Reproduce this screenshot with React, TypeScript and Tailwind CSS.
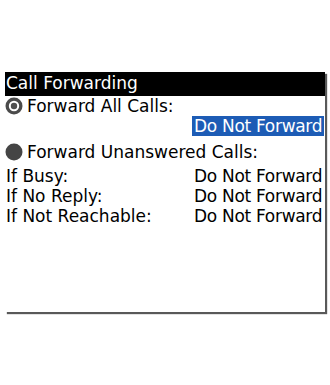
import React from 'react';

const RadioOn = () => (
  <svg width="18" height="18" viewBox="0 0 18 18" className="shrink-0">
    <circle cx="9" cy="9" r="8.5" fill="#4b4b4b" />
    <circle cx="9" cy="9" r="5.2" fill="#ffffff" />
    <circle cx="9" cy="9" r="3.2" fill="#4f4f4f" />
  </svg>
);

const RadioOff = () => (
  <svg width="18" height="18" viewBox="0 0 18 18" className="shrink-0">
    <circle cx="9" cy="9" r="8.5" fill="#454545" />
  </svg>
);

const rules = [
  { label: 'If Busy:', value: 'Do Not Forward' },
  { label: 'If No Reply:', value: 'Do Not Forward' },
  { label: 'If Not Reachable:', value: 'Do Not Forward' },
];

const App = () => {
  return (
    <div className="w-[330px] h-[385px] bg-white pt-[72px] pl-[5px] font-['DejaVu_Sans',sans-serif] text-[17px] text-black">
      <div className="w-[320px] h-[240px] bg-white shadow-[2px_2px_1px_rgba(0,0,0,0.65)] flex flex-col">
        <div className="h-[24px] bg-black text-white pl-[1px] leading-[22px]">Call Forwarding</div>

        <div className="h-[20px] flex items-center gap-[4px] leading-[20px]">
          <RadioOn />
          <span>Forward All Calls:</span>
        </div>
        <div className="h-[20px] flex justify-end pr-[1px] leading-[20px]">
          <span className="bg-[#1d5cb5] text-white w-[132px] px-[2px] whitespace-nowrap tracking-[-0.3px]">Do Not Forward</span>
        </div>

        <div className="h-[20px] mt-[6px] flex items-center gap-[4px] leading-[20px]">
          <RadioOff />
          <span>Forward Unanswered Calls:</span>
        </div>

        <div className="mt-[4px] grid grid-cols-[187px_1fr] leading-[20px]">
          {rules.map((r) => (
            <React.Fragment key={r.label}>
              <div className="h-[20px] pl-[1px]">{r.label}</div>
              <div className="h-[20px] px-[2px] whitespace-nowrap tracking-[-0.3px]">{r.value}</div>
            </React.Fragment>
          ))}
        </div>
      </div>
    </div>
  );
};

export default App;
